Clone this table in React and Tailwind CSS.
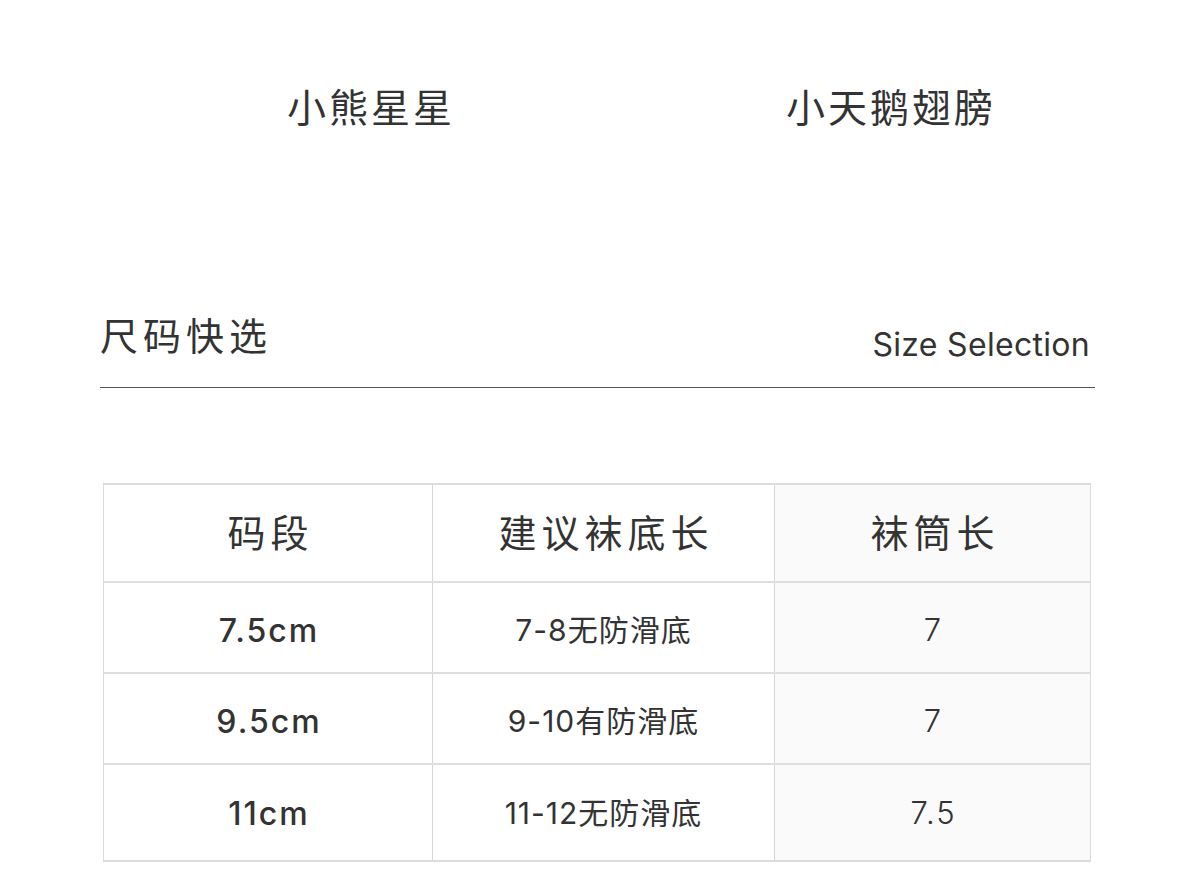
export default function App() {
  const font = { fontFamily: 'Inter, "Noto Sans CJK SC", sans-serif' };
  const rows = [
    ["7.5cm", "7-8无防滑底", "7"],
    ["9.5cm", "9-10有防滑底", "7"],
    ["11cm", "11-12无防滑底", "7.5"],
  ];
  return (
    <div className="w-[1200px] h-[891px] bg-white text-[#333] overflow-hidden" style={font}>
      <div className="flex h-[216px] pt-[84px]">
        <div className="w-[371px] flex justify-end">
          <div className="translate-x-1/2 text-[39px] leading-[48px] tracking-[3px]">小熊星星</div>
        </div>
        <div className="w-[520px] flex justify-end">
          <div className="translate-x-1/2 text-[39px] leading-[48px] tracking-[3px]">小天鹅翅膀</div>
        </div>
      </div>
      <div className="mx-[100px] w-[995px] pt-[96px]">
        <div className="flex items-end justify-between h-[76px] border-b-[1.5px] border-[#555]">
          <div className="text-[38px] leading-[48px] tracking-[5px] mb-[27px]">尺码快选</div>
          <div className="text-[32px] leading-[40px] mb-[22px] mr-[5px] tracking-[0.3px]" style={{ fontFamily: 'Inter, sans-serif' }}>Size Selection</div>
        </div>
      </div>
      <div className="ml-[103px] mt-[95px] w-[988px] border-t-2 border-l border-r border-b-2 border-[#dcdcdc]">
        <div className="flex h-[98px] border-b-2 border-[#dedede]">
          <div className="w-[329px] flex items-center justify-center text-[38px] tracking-[5px] pl-[5px] border-r border-[#d6d6d6]">码段</div>
          <div className="w-[342px] flex items-center justify-center text-[38px] tracking-[5px] pl-[5px] border-r border-[#d6d6d6]">建议袜底长</div>
          <div className="flex-1 flex items-center justify-center text-[38px] tracking-[5px] pl-[5px] bg-[#fafafa]">袜筒长</div>
        </div>
        {rows.map((r, i) => {
          const last = i === 2;
          const pt = last ? "pt-[2px]" : "pt-[6px]";
          return (
            <div key={i} className={`flex ${last ? "h-[95px]" : "h-[91px] border-b-2 border-[#dedede]"}`}>
              <div className={`w-[329px] flex items-center justify-center ${pt} text-[32px] font-medium tracking-[2px] pl-[2px] border-r border-[#d6d6d6]`}>{r[0]}</div>
              <div className={`w-[342px] flex items-center justify-center ${pt} text-[30px] tracking-[1px] border-r border-[#d6d6d6]`}>{r[1]}</div>
              <div className={`flex-1 flex items-center justify-center ${pt} text-[31px] font-light tracking-[2px] pl-[2px] bg-[#fafafa]`}>{r[2]}</div>
            </div>
          );
        })}
      </div>
    </div>
  );
}
